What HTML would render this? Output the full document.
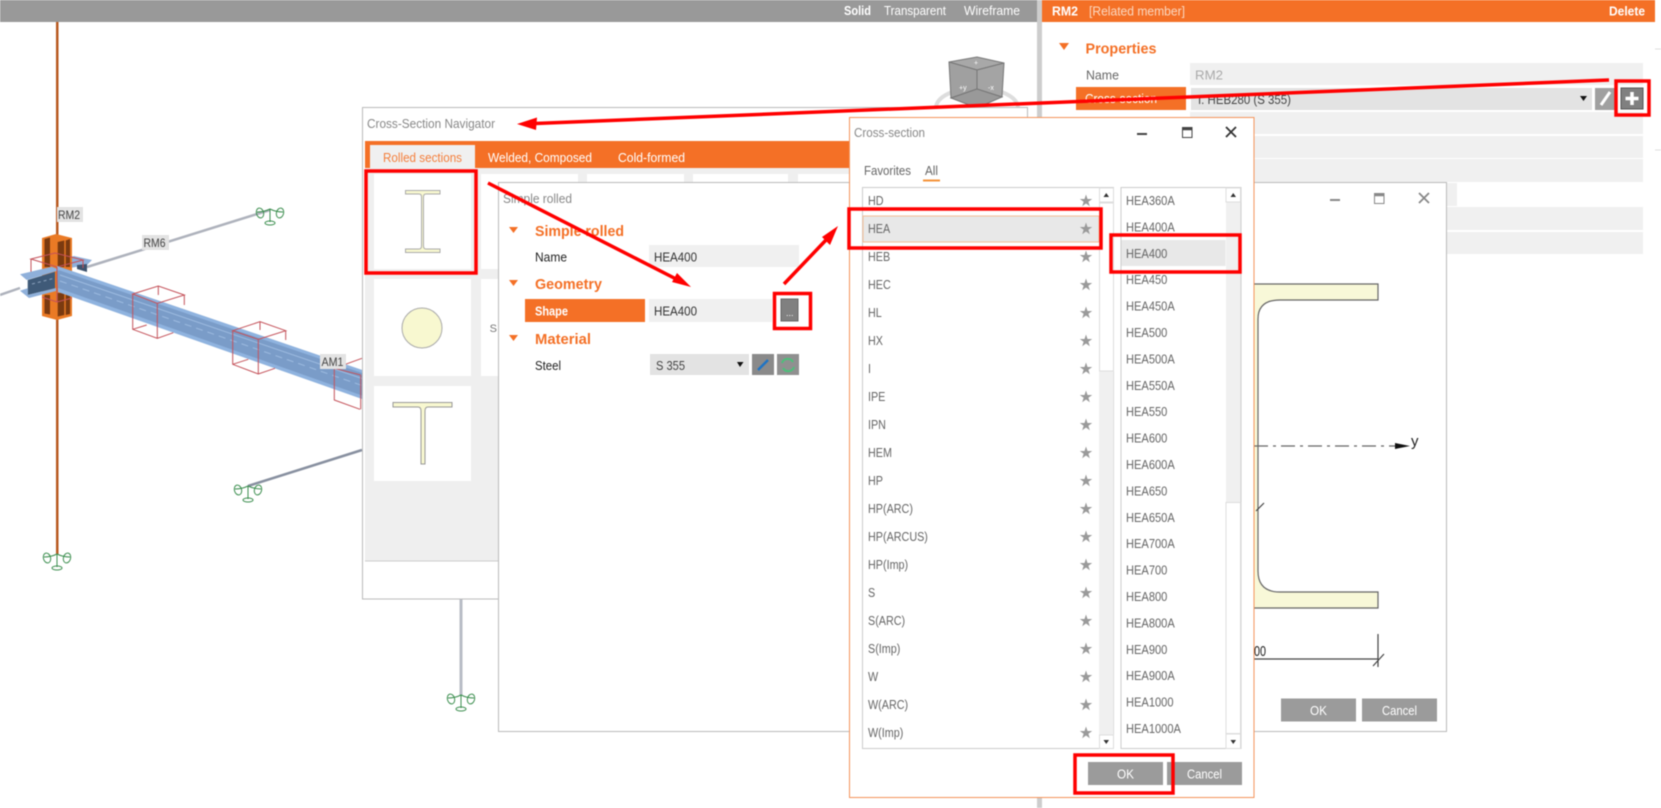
<!DOCTYPE html>
<html><head><meta charset="utf-8"><title>Cross-section</title>
<style>
html,body{margin:0;padding:0;background:#fff;width:1661px;height:808px;overflow:hidden}
svg{display:block;filter:blur(.5px)}
text{font-family:"Liberation Sans",sans-serif;font-size:13px;fill:#666}
.w{fill:#fff}.o{fill:#f47026;font-weight:bold;font-size:15px}.k{fill:#222}.t{fill:#888}
.r{fill:none;stroke:#f00;stroke-width:3.5}
.sup ellipse,.sup path{fill:none;stroke:#3d8f50;stroke-width:1}
.wire{fill:none;stroke:#c4525a;stroke-width:1}
.lbl{font-size:11.5px;fill:#444}
.btn{fill:#fff;font-size:13px}
</style></head><body>
<svg width="1661" height="808" viewBox="0 0 1661 808" xmlns="http://www.w3.org/2000/svg">
<defs>
<path id="st" d="M0-6.5 1.5-2H6.2L2.4.8 3.8 5.3 0 2.5-3.8 5.3-2.4.8-6.2-2H-1.5Z" fill="#9a9a9a"/>
<g id="sp" class="sup"><ellipse cx="-10" cy="4" rx="3.6" ry="5" transform="rotate(-15 -10 4)"/><ellipse cx="10" cy="4" rx="3.6" ry="5" transform="rotate(15 10 4)"/><path d="M-13 3Q-6 3 0 0Q6 3 13 3M0 0V13"/><ellipse cx="0" cy="14" rx="5" ry="2"/></g>
</defs>
<rect width="1661" height="808" fill="#fff"/>

<!-- top bar -->
<rect width="1037" height="22" fill="#999"/>
<text x="844" y="15" class="w" style="font-weight:bold" textLength="27" lengthAdjust="spacingAndGlyphs">Solid</text>
<text x="884" y="15" class="w" textLength="62" lengthAdjust="spacingAndGlyphs">Transparent</text>
<text x="964" y="15" class="w" textLength="56" lengthAdjust="spacingAndGlyphs">Wireframe</text>
<rect x="1037" y="0" width="5" height="808" fill="#cdcdcd"/>

<!-- view cube -->
<ellipse cx="977" cy="108" rx="41" ry="20" fill="none" stroke="#ddd" stroke-width="4"/>
<path d="M949 62 977 57 1004 63 977 70Z" fill="#a8a8a8" stroke="#777"/>
<path d="M949 62 977 70V89L951 98Z" fill="#a0a0a0" stroke="#777"/>
<path d="M977 70 1004 63 1002 97 977 89Z" fill="#a4a4a4" stroke="#777"/>
<path d="M951 98 977 89 1002 97 977 108Z" fill="#999" stroke="#777"/>
<text x="959" y="90" class="w" style="font-size:7px">+y</text>
<text x="988" y="90" class="w" style="font-size:7px">-x</text>
<text x="974" y="65" class="w" style="font-size:7px">+</text>

<!-- right panel -->
<rect x="1042" y="0" width="613" height="22" fill="#f47026"/>
<text x="1052" y="15.500" class="w" style="font-weight:bold" textLength="26" lengthAdjust="spacingAndGlyphs">RM2</text>
<text x="1089" y="15.500" style="fill:#fbd8c0" textLength="96" lengthAdjust="spacingAndGlyphs">[Related member]</text>
<text x="1609" y="15.500" class="w" style="font-weight:bold" textLength="36" lengthAdjust="spacingAndGlyphs">Delete</text>
<path d="M1655 49H1661M1655 150H1661" stroke="#ddd"/>
<path d="M1059 43H1069L1064 50Z" fill="#f47026"/>
<text x="1085.500" y="53.500" class="o" textLength="71" lengthAdjust="spacingAndGlyphs">Properties</text>
<text x="1086" y="79.500" style="fill:#666" textLength="33" lengthAdjust="spacingAndGlyphs">Name</text>
<rect x="1190" y="63" width="453" height="22" fill="#f0f0f0"/>
<text x="1195" y="79.500" style="fill:#aaa" textLength="28" lengthAdjust="spacingAndGlyphs">RM2</text>
<rect x="1076" y="87" width="110" height="23" fill="#f47026"/>
<text x="1085" y="103" class="w" textLength="72" lengthAdjust="spacingAndGlyphs">Cross-section</text>
<rect x="1191" y="88" width="401" height="22" fill="#e3e3e3"/>
<text x="1198" y="104" style="fill:#444" textLength="93" lengthAdjust="spacingAndGlyphs">I. HEB280 (S 355)</text>
<path d="M1580 96H1587L1583.500 101Z" fill="#111"/>
<rect x="1595" y="88" width="21" height="22" fill="#a0a0a0"/>
<path d="M1601 105 1610 92" stroke="#fff" stroke-width="3"/>
<rect x="1621" y="88" width="22" height="21" fill="#808080" stroke="#555"/>
<path d="M1632 92V105M1625.500 98.500H1638.500" stroke="#fff" stroke-width="3.500"/>
<rect x="1190" y="112" width="453" height="22" fill="#f0f0f0"/>
<rect x="1190" y="136" width="453" height="22" fill="#f0f0f0"/>
<rect x="1190" y="159" width="453" height="23" fill="#f0f0f0"/>
<rect x="1190" y="183" width="267" height="23" fill="#f0f0f0"/>
<rect x="1190" y="207" width="453" height="23" fill="#f0f0f0"/>
<rect x="1190" y="232" width="453" height="22" fill="#f0f0f0"/>

<!-- 3D scene -->
<path d="M0 295 20 288M87 267 270 210" stroke="#aeb2bc" stroke-width="2.500"/>
<path d="M248 486 362 450" stroke="#8890a0" stroke-width="2.500"/>
<rect x="56" y="22" width="2.500" height="532" fill="#b85a20"/>
<use href="#sp" x="270" y="209"/>
<use href="#sp" x="248" y="486"/>
<use href="#sp" x="57" y="554"/>
<rect x="459.500" y="599" width="3" height="96" fill="#b8bcc6"/>
<use href="#sp" x="461" y="695"/>

<!-- back flange of the crossing beam -->
<path d="M70 257 74 256 92 260 87 265 70 268Z" fill="#8fb0da"/>
<path d="M77 265 87 264 87 272 77 269Z" fill="#3d536e"/>

<!-- column -->
<path d="M42 238 56 234 72 238V316L57 320 42 316Z" fill="#ea7a25"/>
<path d="M44.500 239 50 237.500V267H44.500ZM57.700 242 64.300 240.500V267H57.700ZM65.700 240.500 70 239V267H65.700Z" fill="#7a3a10"/>
<path d="M44.500 295H50V314.500L44.500 313.500ZM57.700 293H64.300V315L57.700 316.500ZM65.700 293H70V314L65.700 315Z" fill="#7a3a10"/>

<!-- joint wire, back part -->
<path class="wire" d="M31 259 55 253 83 260 57 267ZM31 259V272M83 260V268"/>

<!-- beam -->
<path d="M57 266 362 370V398.500L58 291Z" fill="#7a9cc8"/>
<path d="M57 266 362 370V373L57 269.500Z" fill="#8fb3df"/>
<path d="M58 288 362 395.500V399L58 292Z" fill="#8fb3df"/>
<path d="M60 275 362 378.500" stroke="#9dbbe0" stroke-width="1"/>
<path d="M60 281 362 385.500" stroke="#9dbbe0" stroke-width="1" stroke-dasharray="7 5"/>
<!-- left part -->
<path d="M27.700 280 55 271.700V288.300L27.700 295Z" fill="#3f5a78"/>
<path d="M20 274.300 51.700 266.700 60 270 26.700 280Z" fill="#8fb0da"/>
<path d="M20 290.700 27.700 288.300 27.700 295 56 288V291L29 298Z" fill="#8fb0da"/>
<path d="M32 284 55 278" stroke="#8ba2bd" stroke-dasharray="3 3"/>

<!-- wire cubes -->
<path class="wire" d="M57 267V302M42 297 57 302 72 298"/>
<path class="wire" d="M132.700 294 158.300 286 184.300 295 157.300 303.300ZM132.700 294V329.300L157.300 338.300 173.300 332.700M157.300 303.300V338.300M132.700 329.300 146.700 325M184.300 295V305M158.300 286V295"/>
<path class="wire" d="M232.700 330.700 260 321.700 285.700 330.700 258.300 339.300ZM232.700 330.700V364.300L258.300 374 275 368.300M258.300 339.300V374M232.700 364.300 248.300 359.300M260 321.700V330M285.700 330.700V340"/>
<path class="wire" d="M334.300 368.300 362 358.300M334.300 368.300 360.700 375M334.300 368.300V400L360 409.300M360.700 375V409.300"/>

<!-- labels -->
<rect x="57" y="207" width="26" height="15" fill="#e3e3e3"/><text x="58" y="219" class="lbl" textLength="22" lengthAdjust="spacingAndGlyphs">RM2</text>
<rect x="142" y="235" width="27" height="15" fill="#e3e3e3"/><text x="143.500" y="247" class="lbl" textLength="22" lengthAdjust="spacingAndGlyphs">RM6</text>
<rect x="320" y="354" width="26" height="15" fill="#e3e3e3"/><text x="321.500" y="366" class="lbl" textLength="22" lengthAdjust="spacingAndGlyphs">AM1</text>

<!-- Navigator dialog -->
<rect x="362.500" y="107.500" width="665" height="491.500" fill="#fff" stroke="#bbb"/>
<text x="367" y="128" class="t" textLength="128" lengthAdjust="spacingAndGlyphs">Cross-Section Navigator</text>
<rect x="365" y="168" width="662" height="393" fill="#efefef"/>
<path d="M365 561H1027" stroke="#ccc"/>
<rect x="365" y="141" width="662" height="27" fill="#f47026"/>
<rect x="370" y="145" width="105" height="23" fill="#f0f0f0"/>
<text x="383" y="162" style="fill:#f47f3c" textLength="79" lengthAdjust="spacingAndGlyphs">Rolled sections</text>
<text x="488" y="162" class="w" textLength="104" lengthAdjust="spacingAndGlyphs">Welded, Composed</text>
<text x="618" y="162" class="w" textLength="67" lengthAdjust="spacingAndGlyphs">Cold-formed</text>
<rect x="374" y="174" width="97" height="95" fill="#fff"/>
<rect x="374" y="279" width="97" height="97" fill="#fff"/>
<rect x="374" y="386" width="97" height="95" fill="#fff"/>
<rect x="481" y="174" width="97" height="95" fill="#fff"/>
<rect x="481" y="279" width="97" height="97" fill="#fff"/>
<rect x="587" y="174" width="97" height="30" fill="#fff"/>
<rect x="693" y="174" width="95" height="30" fill="#fff"/>
<rect x="798" y="174" width="95" height="30" fill="#fff"/>
<path d="M405.500 190.500H440V194H426Q423.500 194 423.500 197V246Q423.500 249 426 249H440V252.500H405.500V249H419Q421.500 249 421.500 246V197Q421.500 194 419 194H405.500Z" fill="#f8f8d0" stroke="#aaa"/>
<circle cx="422" cy="328" r="20" fill="#f8f8d0" stroke="#aaa"/>
<path d="M393 402.500H452V407H428Q425 407 425 411V464H421V411Q421 407 418 407H393Z" fill="#f8f8d0" stroke="#999"/>

<!-- Simple rolled / drawing dialog -->
<rect x="498.500" y="182.500" width="948" height="549" fill="#fff" stroke="#bbb"/>
<text x="503" y="203" class="t" textLength="69" lengthAdjust="spacingAndGlyphs">Simple rolled</text>
<path d="M509 227H518L513.500 233Z" fill="#f47026"/>
<text x="535" y="236" class="o" textLength="89" lengthAdjust="spacingAndGlyphs">Simple rolled</text>
<text x="535" y="261.500" class="k" textLength="32" lengthAdjust="spacingAndGlyphs">Name</text>
<rect x="649" y="245" width="150" height="22" fill="#f0f0f0"/>
<text x="654" y="261.500" style="fill:#333" textLength="43" lengthAdjust="spacingAndGlyphs">HEA400</text>
<path d="M509 280H518L513.500 286Z" fill="#f47026"/>
<text x="535" y="289" class="o" textLength="67" lengthAdjust="spacingAndGlyphs">Geometry</text>
<rect x="525" y="299" width="120" height="23" fill="#f47026"/>
<text x="535" y="315.500" class="w" style="font-weight:bold" textLength="33" lengthAdjust="spacingAndGlyphs">Shape</text>
<rect x="649" y="299" width="123" height="23" fill="#f0f0f0"/>
<text x="654" y="315.500" style="fill:#333" textLength="43" lengthAdjust="spacingAndGlyphs">HEA400</text>
<rect x="781" y="299" width="17" height="22" fill="#808080" stroke="#666"/>
<text x="786" y="316" class="w" style="font-size:9px">...</text>
<rect x="774.500" y="293.500" width="36" height="35" class="r"/>
<path d="M509 335H518L513.500 341Z" fill="#f47026"/>
<text x="535" y="344" class="o" textLength="56" lengthAdjust="spacingAndGlyphs">Material</text>
<text x="535" y="370" class="k" textLength="26" lengthAdjust="spacingAndGlyphs">Steel</text>
<rect x="650" y="354" width="99" height="21" fill="#e3e3e3"/>
<text x="656" y="370" style="fill:#444" textLength="29" lengthAdjust="spacingAndGlyphs">S 355</text>
<path d="M737 362H743.500L740 367Z" fill="#111"/>
<rect x="752" y="354" width="22" height="21" fill="#8a8a8a"/>
<path d="M758 370 768 360" stroke="#1f74c4" stroke-width="2.500"/>
<rect x="777" y="354" width="22" height="21" fill="#909090"/>
<path d="M782 363A6 6 0 0 1 793 362M794 367A6 6 0 0 1 783 368" fill="none" stroke="#4cc07a" stroke-width="2"/>
<text x="497" y="332" style="fill:#777;font-size:11px" text-anchor="end">S</text>

<!-- drawing dialog controls -->
<path d="M1330 200H1340" stroke="#888" stroke-width="2"/>
<rect x="1374.500" y="193.500" width="9.500" height="10" fill="none" stroke="#888"/><path d="M1374 195H1384" stroke="#888" stroke-width="2.500"/>
<path d="M1419 193 1429 203M1429 193 1419 203" stroke="#888" stroke-width="1.800"/>
<path d="M1240 284H1378V300H1280Q1258 300 1258 319V571Q1258 592 1280 592H1378V608H1240Z" fill="#f8f8d8" stroke="#666" stroke-width="1.200"/>
<path d="M1254 446H1396" stroke="#666" stroke-width="1.200" stroke-dasharray="14 5 3 5"/>
<path d="M1395 443 1410 446 1395 449Z" fill="#111"/>
<text x="1411" y="446" style="fill:#222;font-size:15px">y</text>
<path d="M1378 634V667M1254 659H1378M1373 666 1384 654M1256 511 1264 503" stroke="#444" stroke-width="1.200"/>
<text x="1254" y="656" style="fill:#222;font-size:15px" textLength="12" lengthAdjust="spacingAndGlyphs">00</text>
<rect x="1281" y="698.500" width="75" height="23" fill="#9b9b9b"/>
<text x="1310" y="715" class="btn" textLength="17" lengthAdjust="spacingAndGlyphs">OK</text>
<rect x="1362" y="698.500" width="75" height="23" fill="#9b9b9b"/>
<text x="1382" y="715" class="btn" textLength="35" lengthAdjust="spacingAndGlyphs">Cancel</text>

<!-- Cross-section dialog -->
<rect x="849.500" y="117.500" width="404.500" height="680" fill="#fff" stroke="#f4935a"/>
<text x="854" y="137" class="t" textLength="71" lengthAdjust="spacingAndGlyphs">Cross-section</text>
<path d="M1137 134H1147" stroke="#444" stroke-width="2"/>
<rect x="1182.500" y="127.500" width="9.500" height="10" fill="none" stroke="#444"/><path d="M1182 129H1192" stroke="#444" stroke-width="2.500"/>
<path d="M1226 127 1236 137M1236 127 1226 137" stroke="#333" stroke-width="1.800"/>
<text x="864" y="175" textLength="47" lengthAdjust="spacingAndGlyphs">Favorites</text>
<text x="925" y="175" textLength="13" lengthAdjust="spacingAndGlyphs">All</text>
<rect x="923" y="179.500" width="17" height="2" fill="#f4933a"/>

<!-- left list -->
<rect x="862.500" y="187.500" width="251" height="561" fill="#fff" stroke="#ccc"/>
<rect x="1099" y="188" width="14.500" height="560" fill="#f0f0f0"/>
<rect x="1099.500" y="203" width="14" height="168" fill="#fff" stroke="#ddd"/>
<rect x="1099.500" y="188" width="14" height="14" fill="#fff" stroke="#ddd"/>
<path d="M1103.500 197H1109L1106.250 193Z" fill="#333"/>
<rect x="1099.500" y="735" width="14" height="13.500" fill="#fff" stroke="#ddd"/>
<path d="M1103.500 740H1109L1106.250 744Z" fill="#333"/>
<rect x="863" y="216" width="236" height="26" fill="#e8e8e8" stroke="#f2bd98"/>
<g transform="translate(868 0) scale(.83 1)">
<text y="205">HD</text><text y="233">HEA</text><text y="261">HEB</text><text y="289">HEC</text><text y="317">HL</text><text y="345">HX</text><text y="373">I</text><text y="401">IPE</text><text y="429">IPN</text><text y="457">HEM</text><text y="485">HP</text><text y="513">HP(ARC)</text><text y="541">HP(ARCUS)</text><text y="569">HP(Imp)</text><text y="597">S</text><text y="625">S(ARC)</text><text y="653">S(Imp)</text><text y="681">W</text><text y="709">W(ARC)</text><text y="737">W(Imp)</text>
</g>
<use href="#st" x="1086" y="201"/><use href="#st" x="1086" y="229"/><use href="#st" x="1086" y="257"/><use href="#st" x="1086" y="285"/><use href="#st" x="1086" y="313"/><use href="#st" x="1086" y="341"/><use href="#st" x="1086" y="369"/><use href="#st" x="1086" y="397"/><use href="#st" x="1086" y="425"/><use href="#st" x="1086" y="453"/><use href="#st" x="1086" y="481"/><use href="#st" x="1086" y="509"/><use href="#st" x="1086" y="537"/><use href="#st" x="1086" y="565"/><use href="#st" x="1086" y="593"/><use href="#st" x="1086" y="621"/><use href="#st" x="1086" y="649"/><use href="#st" x="1086" y="677"/><use href="#st" x="1086" y="705"/><use href="#st" x="1086" y="733"/>

<!-- right list -->
<rect x="1121" y="187.500" width="120" height="561" fill="#fff" stroke="#ccc"/>
<rect x="1226" y="188" width="14.500" height="314" fill="#f0f0f0"/>
<rect x="1226" y="502.500" width="14.500" height="231" fill="#fff" stroke="#ddd"/>
<rect x="1226" y="188" width="14.500" height="14" fill="#fff" stroke="#ddd"/>
<path d="M1230.500 197H1236L1233.250 193Z" fill="#333"/>
<rect x="1226" y="734" width="14.500" height="14.500" fill="#fff" stroke="#ddd"/>
<path d="M1230.500 740H1236L1233.250 744Z" fill="#333"/>
<rect x="1121.500" y="240" width="104" height="26" fill="#e8e8e8"/>
<g transform="translate(1126 0) scale(.855 1)">
<text y="205">HEA360A</text><text y="231.400">HEA400A</text><text y="257.800">HEA400</text><text y="284.200">HEA450</text><text y="310.600">HEA450A</text><text y="337">HEA500</text><text y="363.400">HEA500A</text><text y="389.800">HEA550A</text><text y="416.200">HEA550</text><text y="442.600">HEA600</text><text y="469">HEA600A</text><text y="495.400">HEA650</text><text y="521.800">HEA650A</text><text y="548.200">HEA700A</text><text y="574.600">HEA700</text><text y="601">HEA800</text><text y="627.400">HEA800A</text><text y="653.800">HEA900</text><text y="680.200">HEA900A</text><text y="706.600">HEA1000</text><text y="733">HEA1000A</text>
</g>
<rect x="1088" y="762" width="75" height="23" fill="#9b9b9b"/>
<text x="1117" y="778.500" class="btn" textLength="17" lengthAdjust="spacingAndGlyphs">OK</text>
<rect x="1167" y="762" width="75" height="23" fill="#9b9b9b"/>
<text x="1187" y="778.500" class="btn" textLength="35" lengthAdjust="spacingAndGlyphs">Cancel</text>

<!-- red annotations -->
<rect x="366" y="171" width="110" height="102" class="r"/>
<rect x="849" y="209" width="252" height="39" class="r"/>
<rect x="1111" y="235" width="129" height="37" class="r"/>
<rect x="1075" y="755" width="98" height="38" class="r"/>
<rect x="1616" y="81" width="33" height="34" class="r"/>
<path d="M1609 80 535 123.500" stroke="#f00" stroke-width="3.500"/>
<path d="M517 124 537 117.500 536 130Z" fill="#f00"/>
<path d="M488 183 680 281" stroke="#f00" stroke-width="3.500"/>
<path d="M691 287 677 273 672 282Z" fill="#f00"/>
<path d="M784 284 826 240" stroke="#f00" stroke-width="3.500"/>
<path d="M838 226 822 237 830 245Z" fill="#f00"/>
</svg>
</body></html>
